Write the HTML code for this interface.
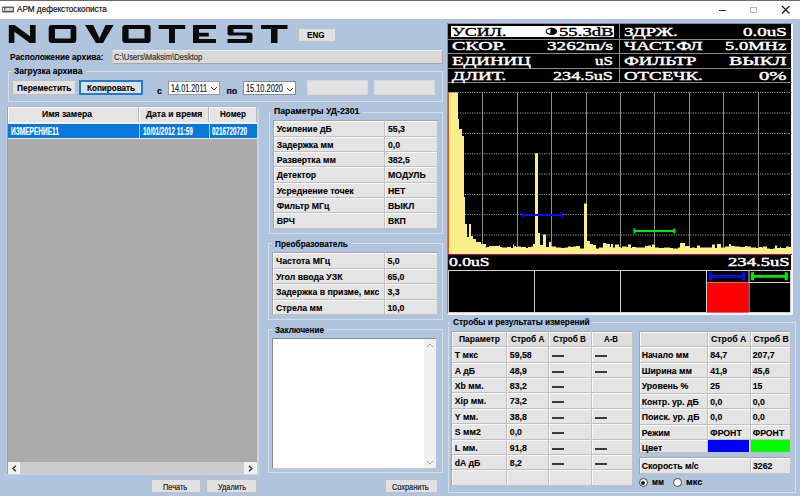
<!DOCTYPE html><html><head><meta charset="utf-8"><style>
html,body{margin:0;padding:0;}
body{width:800px;height:496px;overflow:hidden;position:relative;background:#B0C4DE;font-family:"Liberation Sans",sans-serif;}
.a{position:absolute;box-sizing:border-box;}
.t{position:absolute;white-space:nowrap;}
</style></head><body>
<div class="a" style="left:0px;top:0px;width:800px;height:19px;background:#fff;border-top:1px solid #6a6a6a;"></div>
<svg class="a" style="left:0;top:0" width="20" height="19" viewBox="0 0 20 19"><rect x="2" y="6.4" width="12" height="6" rx="1.2" fill="#5a5a5a"/><rect x="2.8" y="7.9" width="1.2" height="3" fill="#f4f4f4"/><rect x="4.8" y="7.9" width="7.8" height="3" fill="#c8c8c8"/><rect x="7" y="8.6" width="2" height="1.6" fill="#fafafa"/><rect x="10.8" y="8.2" width="1.5" height="2.4" fill="#e8e8e8"/></svg>
<div class="t" style="left:17.00px;top:5.00px;font:normal 9.01px/9.01px 'Liberation Sans';color:#111;-webkit-text-stroke:0.2px #111;;transform:scaleX(0.907);transform-origin:0 0">АРМ дефекстоскописта</div>
<div class="a" style="left:719px;top:10px;width:7px;height:1px;background:#333;"></div>
<div class="a" style="left:750px;top:6.5px;width:7px;height:6.5px;border:1px solid #bcbcbc;"></div>
<svg class="a" style="left:781px;top:5px" width="10" height="10" viewBox="0 0 10 10"><path d="M1 1L8.5 8.5M8.5 1L1 8.5" stroke="#111" stroke-width="1.1"/></svg>
<svg class="a" style="left:0;top:0" width="300" height="50" viewBox="0 0 300 50">
<g fill="#0a0a0a">
<path d="M8.8 25h5.8l15.4 11.2V25h5.6v18h-5.8L14.4 31.8V43h-5.6z"/>
<path fill-rule="evenodd" d="M51.7 25h21.6a3 3 0 0 1 3 3v12a3 3 0 0 1-3 3H51.7a3 3 0 0 1-3-3V28a3 3 0 0 1 3-3zM55 29v9.6h15.6v-9.6z"/>
<path d="M85 25h8.2l6.3 13.2 6-13.2h8.1L103 43h-7z"/>
<path fill-rule="evenodd" d="M125.3 25h22.3a3 3 0 0 1 3 3v12a3 3 0 0 1-3 3H125.3a3 3 0 0 1-3-3V28a3 3 0 0 1 3-3zM128.6 29v9.6h15.9v-9.6z"/>
<path d="M158.7 25h26.5v4h-10.2v14h-6v-14h-10.3z"/>
<path d="M193 25h23v4h-17v3.8h9.8v3.6h-9.8v2.6h17v4h-23z"/>
<path d="M230 25h22.5v4h-19v3.5h16.5a2.5 2.5 0 0 1 2.5 2.5v5.5a2.5 2.5 0 0 1-2.5 2.5h-22.5v-4h19v-3.5h-16.5a2.5 2.5 0 0 1-2.5-2.5v-5.5a2.5 2.5 0 0 1 2.5-2.5z"/>
<path d="M261 25h26.5v4h-10v14h-6.5v-14h-10z"/>
</g></svg>
<div class="a" style="left:298px;top:28px;width:38px;height:14px;background:#E1E1E1;border:1px solid #C0C0C0;"></div>
<div class="t" style="left:307.40px;top:31.00px;font:bold 9.01px/9.01px 'Liberation Sans';color:#000;-webkit-text-stroke:0.1px #000;;transform:scaleX(0.896);transform-origin:0 0">ENG</div>
<div class="t" style="left:9.75px;top:52.00px;font:bold 9.45px/9.45px 'Liberation Sans';color:#000;-webkit-text-stroke:0.1px #000;;transform:scaleX(0.878);transform-origin:0 0">Расположение архива:</div>
<div class="a" style="left:112px;top:50px;width:331px;height:14px;background:#D9D9D9;border:1px solid #A8A8A8;border-top-color:#ECECEC;border-left-color:#D0D0D0;"></div>
<div class="t" style="left:114.00px;top:52.00px;font:normal 9.59px/9.59px 'Liberation Sans';color:#333;-webkit-text-stroke:0.2px #333;;transform:scaleX(0.798);transform-origin:0 0">C:\Users\Maksim\Desktop</div>
<div class="a" style="left:8px;top:71px;width:435px;height:30.5px;border:1px solid #D5DCE6;"></div>
<div class="a" style="left:12px;top:66px;width:74px;height:8px;background:#B0C4DE;"></div>
<div class="t" style="left:14.00px;top:67.00px;font:bold 8.72px/8.72px 'Liberation Sans';color:#000;-webkit-text-stroke:0.1px #000;;transform:scaleX(0.974);transform-origin:0 0">Загрузка архива</div>
<div class="a" style="left:12px;top:80px;width:64px;height:15px;background:#E1E1E1;border:1px solid #BDBDBD;"></div>
<div class="t" style="left:16.60px;top:84.00px;font:bold 9.16px/9.16px 'Liberation Sans';color:#000;-webkit-text-stroke:0.1px #000;;transform:scaleX(0.917);transform-origin:0 0">Переместить</div>
<div class="a" style="left:79px;top:80px;width:64px;height:15px;background:#E1E1E1;border:2px solid #1A7ED8;"></div>
<div class="t" style="left:87.00px;top:84.00px;font:bold 9.16px/9.16px 'Liberation Sans';color:#000;-webkit-text-stroke:0.1px #000;;transform:scaleX(0.885);transform-origin:0 0">Копировать</div>
<div class="t" style="left:157.00px;top:87.00px;font:bold 8.90px/8.90px 'Liberation Sans';color:#000;-webkit-text-stroke:0.1px #000;;transform:scaleX(1.000);transform-origin:0 0">с</div>
<div class="a" style="left:168px;top:81px;width:52px;height:14px;background:#fff;border:1px solid #9A9A9A;"></div>
<div class="t" style="left:170.60px;top:84.00px;font:normal 10.03px/10.03px 'Liberation Sans';color:#222;-webkit-text-stroke:0.2px #222;;transform:scaleX(0.728);transform-origin:0 0">14.01.2011</div>
<svg class="a" style="left:210px;top:86px" width="8" height="5" viewBox="0 0 8 5"><path d="M1 1L4 4L7 1" stroke="#444" fill="none" stroke-width="1"/></svg>
<div class="t" style="left:226.50px;top:87.00px;font:bold 8.90px/8.90px 'Liberation Sans';color:#000;-webkit-text-stroke:0.1px #000;;transform:scaleX(1.000);transform-origin:0 0">по</div>
<div class="a" style="left:243px;top:81px;width:53px;height:14px;background:#fff;border:1px solid #8A8A8A;"></div>
<div class="t" style="left:245.50px;top:84.00px;font:normal 10.03px/10.03px 'Liberation Sans';color:#222;-webkit-text-stroke:0.2px #222;;transform:scaleX(0.737);transform-origin:0 0">15.10.2020</div>
<svg class="a" style="left:286px;top:86.5px" width="8" height="5" viewBox="0 0 8 5"><path d="M1 1L4 4L7 1" stroke="#444" fill="none" stroke-width="1"/></svg>
<div class="a" style="left:307px;top:80px;width:61px;height:15px;background:#E2E2E2;border:1px solid #D8D8D8;"></div>
<div class="a" style="left:374px;top:80px;width:61px;height:15px;background:#E2E2E2;border:1px solid #D8D8D8;"></div>
<div class="a" style="left:6px;top:106px;width:253px;height:369px;border:1px solid #C6D4E6;border-right-width:2px;border-top-color:#A9BAD0;border-left-color:#B9C8DC;"></div>
<div class="a" style="left:7px;top:107px;width:1px;height:367px;background:#9AA6B4;"></div>
<div class="a" style="left:7.5px;top:107px;width:249.5px;height:15px;background:#E4E4E4;border-top:1px solid #FAFAFA;border-left:1px solid #FAFAFA;"></div>
<div class="a" style="left:138.4px;top:107px;width:1px;height:15px;background:#B8B8B8;"></div>
<div class="a" style="left:139.4px;top:107px;width:1px;height:15px;background:#FAFAFA;"></div>
<div class="a" style="left:207.6px;top:107px;width:1px;height:15px;background:#B8B8B8;"></div>
<div class="a" style="left:208.6px;top:107px;width:1px;height:15px;background:#FAFAFA;"></div>
<div class="a" style="left:256px;top:107px;width:1px;height:15px;background:#B8B8B8;"></div>
<div class="t" style="left:42.00px;top:110.00px;font:bold 8.72px/8.72px 'Liberation Sans';color:#000;-webkit-text-stroke:0.1px #000;;transform:scaleX(0.985);transform-origin:0 0">Имя замера</div>
<div class="t" style="left:146.00px;top:110.00px;font:bold 8.72px/8.72px 'Liberation Sans';color:#000;-webkit-text-stroke:0.1px #000;;transform:scaleX(0.983);transform-origin:0 0">Дата и время</div>
<div class="t" style="left:220.00px;top:110.00px;font:bold 8.72px/8.72px 'Liberation Sans';color:#000;-webkit-text-stroke:0.1px #000;;transform:scaleX(0.924);transform-origin:0 0">Номер</div>
<div class="a" style="left:8px;top:122px;width:249px;height:2px;background:#F2F2F2;"></div>
<div class="a" style="left:8px;top:124px;width:249px;height:14px;background:#0A78D7;"></div>
<div class="a" style="left:139.4px;top:124px;width:1px;height:14px;background:#A8CCEE;"></div>
<div class="a" style="left:208.6px;top:124px;width:1px;height:14px;background:#A8CCEE;"></div>
<div class="a" style="left:8px;top:138px;width:249px;height:1px;background:#E8E8E8;"></div>
<div class="t" style="left:11.00px;top:127.00px;font:bold 10.17px/10.17px 'Liberation Sans';color:#fff;-webkit-text-stroke:0.15px #fff;;transform:scaleX(0.642);transform-origin:0 0">ИЗМЕРЕНИЕ11</div>
<div class="t" style="left:143.00px;top:127.00px;font:bold 10.17px/10.17px 'Liberation Sans';color:#fff;-webkit-text-stroke:0.15px #fff;;transform:scaleX(0.631);transform-origin:0 0">10/01/2012 11:59</div>
<div class="t" style="left:212.00px;top:127.00px;font:bold 10.17px/10.17px 'Liberation Sans';color:#fff;-webkit-text-stroke:0.15px #fff;;transform:scaleX(0.619);transform-origin:0 0">0216720720</div>
<div class="a" style="left:8px;top:139px;width:249px;height:323px;background:#ABABAB;"></div>
<div class="a" style="left:8px;top:462px;width:249px;height:12px;background:#F0F0F0;"></div>
<div class="a" style="left:20px;top:462px;width:224px;height:12px;background:#CDCDCD;"></div>
<svg class="a" style="left:11px;top:464.5px" width="7" height="7" viewBox="0 0 7 7"><path d="M4.8 0.8L2 3.5L4.8 6.2" stroke="#333" fill="none" stroke-width="1.4"/></svg>
<svg class="a" style="left:247px;top:464.5px" width="7" height="7" viewBox="0 0 7 7"><path d="M2 0.8L4.8 3.5L2 6.2" stroke="#333" fill="none" stroke-width="1.4"/></svg>
<div class="a" style="left:151px;top:479px;width:50px;height:14px;background:#E1E1E1;border:1px solid #C0C0C0;"></div>
<div class="t" style="left:162.50px;top:483.00px;font:normal 8.72px/8.72px 'Liberation Sans';color:#222;-webkit-text-stroke:0.2px #222;;transform:scaleX(0.844);transform-origin:0 0">Печать</div>
<div class="a" style="left:206px;top:479px;width:51px;height:14px;background:#E1E1E1;border:1px solid #C0C0C0;"></div>
<div class="t" style="left:217.50px;top:483.00px;font:normal 8.72px/8.72px 'Liberation Sans';color:#222;-webkit-text-stroke:0.2px #222;;transform:scaleX(0.841);transform-origin:0 0">Удалить</div>
<div class="a" style="left:268.5px;top:111.5px;width:174.0px;height:122.5px;border:1px solid #D5DCE6;"></div>
<div class="a" style="left:271px;top:107.5px;width:91.39999999999998px;height:8px;background:#B0C4DE;"></div>
<div class="t" style="left:274.00px;top:107.00px;font:bold 8.72px/8.72px 'Liberation Sans';color:#000;-webkit-text-stroke:0.1px #000;;transform:scaleX(0.999);transform-origin:0 0">Параметры УД-2301</div>
<div class="a" style="left:273.0px;top:120px;width:164.0px;height:108px;background:#E4E4E4;"></div>
<div class="a" style="left:273.0px;top:121px;width:164.0px;height:1px;background:#FAFAFA;"></div>
<div class="a" style="left:273.0px;top:137px;width:164.0px;height:1px;background:#FAFAFA;"></div>
<div class="a" style="left:273.0px;top:152px;width:164.0px;height:1px;background:#FAFAFA;"></div>
<div class="a" style="left:273.0px;top:167px;width:164.0px;height:1px;background:#FAFAFA;"></div>
<div class="a" style="left:273.0px;top:183px;width:164.0px;height:1px;background:#FAFAFA;"></div>
<div class="a" style="left:273.0px;top:198px;width:164.0px;height:1px;background:#FAFAFA;"></div>
<div class="a" style="left:273.0px;top:213px;width:164.0px;height:1px;background:#FAFAFA;"></div>
<div class="a" style="left:274.0px;top:120px;width:1px;height:108px;background:#FAFAFA;"></div>
<div class="a" style="left:385px;top:120px;width:1px;height:108px;background:#FAFAFA;"></div>
<div class="a" style="left:273.0px;top:120px;width:165.0px;height:1px;background:#A4A4A4;"></div>
<div class="a" style="left:273.0px;top:136px;width:165.0px;height:1px;background:#C0C0C0;"></div>
<div class="a" style="left:273.0px;top:151px;width:165.0px;height:1px;background:#C0C0C0;"></div>
<div class="a" style="left:273.0px;top:166px;width:165.0px;height:1px;background:#C0C0C0;"></div>
<div class="a" style="left:273.0px;top:182px;width:165.0px;height:1px;background:#C0C0C0;"></div>
<div class="a" style="left:273.0px;top:197px;width:165.0px;height:1px;background:#C0C0C0;"></div>
<div class="a" style="left:273.0px;top:212px;width:165.0px;height:1px;background:#C0C0C0;"></div>
<div class="a" style="left:273.0px;top:228px;width:165.0px;height:1px;background:#C0C0C0;"></div>
<div class="a" style="left:273.0px;top:120px;width:1px;height:109px;background:#A4A4A4;"></div>
<div class="a" style="left:384px;top:120px;width:1px;height:109px;background:#C0C0C0;"></div>
<div class="a" style="left:437px;top:120px;width:1px;height:109px;background:#C0C0C0;"></div>
<div class="t" style="left:276.75px;top:125.00px;font:bold 8.72px/8.72px 'Liberation Sans';color:#000;-webkit-text-stroke:0.1px #000;;transform:scaleX(1.000);transform-origin:0 0">Усиление дБ</div>
<div class="t" style="left:388.00px;top:125.00px;font:bold 8.72px/8.72px 'Liberation Sans';color:#000;-webkit-text-stroke:0.1px #000;;transform:scaleX(1.000);transform-origin:0 0">55,3</div>
<div class="t" style="left:276.75px;top:141.00px;font:bold 8.72px/8.72px 'Liberation Sans';color:#000;-webkit-text-stroke:0.1px #000;;transform:scaleX(1.000);transform-origin:0 0">Задержка мм</div>
<div class="t" style="left:388.00px;top:141.00px;font:bold 8.72px/8.72px 'Liberation Sans';color:#000;-webkit-text-stroke:0.1px #000;;transform:scaleX(1.000);transform-origin:0 0">0,0</div>
<div class="t" style="left:276.75px;top:156.00px;font:bold 8.72px/8.72px 'Liberation Sans';color:#000;-webkit-text-stroke:0.1px #000;;transform:scaleX(1.000);transform-origin:0 0">Развертка мм</div>
<div class="t" style="left:388.00px;top:156.00px;font:bold 8.72px/8.72px 'Liberation Sans';color:#000;-webkit-text-stroke:0.1px #000;;transform:scaleX(1.000);transform-origin:0 0">382,5</div>
<div class="t" style="left:276.75px;top:171.00px;font:bold 8.72px/8.72px 'Liberation Sans';color:#000;-webkit-text-stroke:0.1px #000;;transform:scaleX(1.000);transform-origin:0 0">Детектор</div>
<div class="t" style="left:388.00px;top:171.00px;font:bold 8.72px/8.72px 'Liberation Sans';color:#000;-webkit-text-stroke:0.1px #000;;transform:scaleX(1.000);transform-origin:0 0">МОДУЛЬ</div>
<div class="t" style="left:276.75px;top:187.00px;font:bold 8.72px/8.72px 'Liberation Sans';color:#000;-webkit-text-stroke:0.1px #000;;transform:scaleX(1.000);transform-origin:0 0">Усреднение точек</div>
<div class="t" style="left:388.00px;top:187.00px;font:bold 8.72px/8.72px 'Liberation Sans';color:#000;-webkit-text-stroke:0.1px #000;;transform:scaleX(1.000);transform-origin:0 0">НЕТ</div>
<div class="t" style="left:276.75px;top:202.00px;font:bold 8.72px/8.72px 'Liberation Sans';color:#000;-webkit-text-stroke:0.1px #000;;transform:scaleX(1.000);transform-origin:0 0">Фильтр МГц</div>
<div class="t" style="left:388.00px;top:202.00px;font:bold 8.72px/8.72px 'Liberation Sans';color:#000;-webkit-text-stroke:0.1px #000;;transform:scaleX(1.000);transform-origin:0 0">ВЫКЛ</div>
<div class="t" style="left:276.75px;top:217.00px;font:bold 8.72px/8.72px 'Liberation Sans';color:#000;-webkit-text-stroke:0.1px #000;;transform:scaleX(1.000);transform-origin:0 0">ВРЧ</div>
<div class="t" style="left:388.00px;top:217.00px;font:bold 8.72px/8.72px 'Liberation Sans';color:#000;-webkit-text-stroke:0.1px #000;;transform:scaleX(1.000);transform-origin:0 0">ВКП</div>
<div class="a" style="left:268px;top:243.4px;width:174.5px;height:76.6px;border:1px solid #D5DCE6;"></div>
<div class="a" style="left:271.75px;top:239.4px;width:78.75px;height:8px;background:#B0C4DE;"></div>
<div class="t" style="left:274.75px;top:240.00px;font:bold 8.72px/8.72px 'Liberation Sans';color:#000;-webkit-text-stroke:0.1px #000;;transform:scaleX(0.945);transform-origin:0 0">Преобразователь</div>
<div class="a" style="left:272px;top:252px;width:165px;height:62px;background:#E4E4E4;"></div>
<div class="a" style="left:272px;top:253px;width:165px;height:1px;background:#FAFAFA;"></div>
<div class="a" style="left:272px;top:269px;width:165px;height:1px;background:#FAFAFA;"></div>
<div class="a" style="left:272px;top:284px;width:165px;height:1px;background:#FAFAFA;"></div>
<div class="a" style="left:272px;top:300px;width:165px;height:1px;background:#FAFAFA;"></div>
<div class="a" style="left:273px;top:252px;width:1px;height:62px;background:#FAFAFA;"></div>
<div class="a" style="left:385px;top:252px;width:1px;height:62px;background:#FAFAFA;"></div>
<div class="a" style="left:272px;top:252px;width:166px;height:1px;background:#A4A4A4;"></div>
<div class="a" style="left:272px;top:268px;width:166px;height:1px;background:#C0C0C0;"></div>
<div class="a" style="left:272px;top:283px;width:166px;height:1px;background:#C0C0C0;"></div>
<div class="a" style="left:272px;top:299px;width:166px;height:1px;background:#C0C0C0;"></div>
<div class="a" style="left:272px;top:314px;width:166px;height:1px;background:#C0C0C0;"></div>
<div class="a" style="left:272px;top:252px;width:1px;height:63px;background:#A4A4A4;"></div>
<div class="a" style="left:384px;top:252px;width:1px;height:63px;background:#C0C0C0;"></div>
<div class="a" style="left:437px;top:252px;width:1px;height:63px;background:#C0C0C0;"></div>
<div class="t" style="left:276.00px;top:257.00px;font:bold 8.72px/8.72px 'Liberation Sans';color:#000;-webkit-text-stroke:0.1px #000;;transform:scaleX(1.000);transform-origin:0 0">Частота МГц</div>
<div class="t" style="left:387.50px;top:257.00px;font:bold 8.72px/8.72px 'Liberation Sans';color:#000;-webkit-text-stroke:0.1px #000;;transform:scaleX(1.000);transform-origin:0 0">5,0</div>
<div class="t" style="left:276.00px;top:273.00px;font:bold 8.72px/8.72px 'Liberation Sans';color:#000;-webkit-text-stroke:0.1px #000;;transform:scaleX(1.000);transform-origin:0 0">Угол ввода УЗК</div>
<div class="t" style="left:387.50px;top:273.00px;font:bold 8.72px/8.72px 'Liberation Sans';color:#000;-webkit-text-stroke:0.1px #000;;transform:scaleX(1.000);transform-origin:0 0">65,0</div>
<div class="t" style="left:276.00px;top:288.00px;font:bold 8.72px/8.72px 'Liberation Sans';color:#000;-webkit-text-stroke:0.1px #000;;transform:scaleX(1.000);transform-origin:0 0">Задержка в призме, мкс</div>
<div class="t" style="left:387.50px;top:288.00px;font:bold 8.72px/8.72px 'Liberation Sans';color:#000;-webkit-text-stroke:0.1px #000;;transform:scaleX(1.000);transform-origin:0 0">3,3</div>
<div class="t" style="left:276.00px;top:304.00px;font:bold 8.72px/8.72px 'Liberation Sans';color:#000;-webkit-text-stroke:0.1px #000;;transform:scaleX(1.000);transform-origin:0 0">Стрела мм</div>
<div class="t" style="left:387.50px;top:304.00px;font:bold 8.72px/8.72px 'Liberation Sans';color:#000;-webkit-text-stroke:0.1px #000;;transform:scaleX(1.000);transform-origin:0 0">10,0</div>
<div class="a" style="left:268px;top:329px;width:174.5px;height:144px;border:1px solid #D5DCE6;"></div>
<div class="a" style="left:271.75px;top:325px;width:55.0px;height:8px;background:#B0C4DE;"></div>
<div class="t" style="left:274.75px;top:326.00px;font:bold 8.72px/8.72px 'Liberation Sans';color:#000;-webkit-text-stroke:0.1px #000;;transform:scaleX(0.927);transform-origin:0 0">Заключение</div>
<div class="a" style="left:272px;top:338px;width:164px;height:131px;background:#fff;border:1px solid #8C8C8C;border-right-color:#C8C8C8;border-bottom-color:#C8C8C8;"></div>
<div class="a" style="left:423.5px;top:339px;width:12px;height:129px;background:#F0F0F0;"></div>
<svg class="a" style="left:425.5px;top:343px" width="8" height="5" viewBox="0 0 8 5"><path d="M1 4L4 1L7 4" stroke="#A6A6A6" fill="none" stroke-width="1"/></svg>
<svg class="a" style="left:425.5px;top:459.5px" width="8" height="5" viewBox="0 0 8 5"><path d="M1 1L4 4L7 1" stroke="#A6A6A6" fill="none" stroke-width="1"/></svg>
<div class="a" style="left:385px;top:479px;width:53px;height:14px;background:#E1E1E1;border:1px solid #C0C0C0;"></div>
<div class="t" style="left:392.20px;top:483.00px;font:normal 8.72px/8.72px 'Liberation Sans';color:#222;-webkit-text-stroke:0.2px #222;;transform:scaleX(0.845);transform-origin:0 0">Сохранить</div>
<div class="a" style="left:447px;top:23px;width:346px;height:292px;background:#000;border-top:1px solid #8C8C8C;border-left:1px solid #8C8C8C;border-right:2px solid #F2F5FA;border-bottom:2px solid #F2F5FA;"></div>
<div class="a" style="left:448px;top:39px;width:344px;height:1px;background:#8A8A8A;"></div>
<div class="a" style="left:448px;top:53px;width:344px;height:1px;background:#8A8A8A;"></div>
<div class="a" style="left:448px;top:67.6px;width:344px;height:1px;background:#8A8A8A;"></div>
<div class="a" style="left:448px;top:82.2px;width:344px;height:1px;background:#8A8A8A;"></div>
<div class="a" style="left:619px;top:24px;width:1px;height:59px;background:#8A8A8A;"></div>
<div class="a" style="left:451px;top:26px;width:163px;height:11px;background:#fff;"></div>
<div class="t" style="left:451.75px;top:26.00px;font:normal 12.21px/12.21px 'Liberation Serif';color:#000;-webkit-text-stroke:0.35px #000;;transform:scaleX(1.474);transform-origin:0 0">УСИЛ.</div>
<svg class="a" style="left:544px;top:26px" width="15" height="11" viewBox="0 0 15 11"><ellipse cx="7.3" cy="5.3" rx="5.2" ry="3.1" fill="#fff" stroke="#000" stroke-width="1.1"/><path d="M7 2.2A5.2 3.1 0 0 1 7 8.4Z" fill="#000" stroke="#000" stroke-width="1.1"/></svg>
<div class="t" style="left:558.50px;top:26.00px;font:normal 12.21px/12.21px 'Liberation Serif';color:#000;-webkit-text-stroke:0.35px #000;;transform:scaleX(1.533);transform-origin:0 0">55.3dB</div>
<div class="t" style="left:451.75px;top:40.00px;font:normal 12.21px/12.21px 'Liberation Serif';color:#fff;-webkit-text-stroke:0.4px #fff;;transform:scaleX(1.638);transform-origin:0 0">СКОР.</div>
<div class="t" style="left:547.40px;top:40.00px;font:normal 12.21px/12.21px 'Liberation Serif';color:#fff;-webkit-text-stroke:0.4px #fff;;transform:scaleX(1.569);transform-origin:0 0">3262m/s</div>
<div class="t" style="left:451.75px;top:55.00px;font:normal 12.21px/12.21px 'Liberation Serif';color:#fff;-webkit-text-stroke:0.4px #fff;;transform:scaleX(1.544);transform-origin:0 0">ЕДИНИЦ</div>
<div class="t" style="left:594.70px;top:55.00px;font:normal 12.21px/12.21px 'Liberation Serif';color:#fff;-webkit-text-stroke:0.4px #fff;;transform:scaleX(1.388);transform-origin:0 0">uS</div>
<div class="t" style="left:451.75px;top:70.00px;font:normal 12.21px/12.21px 'Liberation Serif';color:#fff;-webkit-text-stroke:0.4px #fff;;transform:scaleX(1.568);transform-origin:0 0">ДЛИТ.</div>
<div class="t" style="left:552.60px;top:70.00px;font:normal 12.21px/12.21px 'Liberation Serif';color:#fff;-webkit-text-stroke:0.4px #fff;;transform:scaleX(1.486);transform-origin:0 0">234.5uS</div>
<div class="t" style="left:623.75px;top:26.00px;font:normal 12.21px/12.21px 'Liberation Serif';color:#fff;-webkit-text-stroke:0.4px #fff;;transform:scaleX(1.578);transform-origin:0 0">ЗДРЖ.</div>
<div class="t" style="left:742.50px;top:26.00px;font:normal 12.21px/12.21px 'Liberation Serif';color:#fff;-webkit-text-stroke:0.4px #fff;;transform:scaleX(1.553);transform-origin:0 0">0.0uS</div>
<div class="t" style="left:623.75px;top:40.00px;font:normal 12.21px/12.21px 'Liberation Serif';color:#fff;-webkit-text-stroke:0.4px #fff;;transform:scaleX(1.556);transform-origin:0 0">ЧАСТ.ФЛ</div>
<div class="t" style="left:725.00px;top:40.00px;font:normal 12.21px/12.21px 'Liberation Serif';color:#fff;-webkit-text-stroke:0.4px #fff;;transform:scaleX(1.517);transform-origin:0 0">5.0MHz</div>
<div class="t" style="left:623.75px;top:55.00px;font:normal 12.21px/12.21px 'Liberation Serif';color:#fff;-webkit-text-stroke:0.4px #fff;;transform:scaleX(1.539);transform-origin:0 0">ФИЛЬТР</div>
<div class="t" style="left:728.75px;top:55.00px;font:normal 12.21px/12.21px 'Liberation Serif';color:#fff;-webkit-text-stroke:0.4px #fff;;transform:scaleX(1.632);transform-origin:0 0">ВЫКЛ</div>
<div class="t" style="left:623.75px;top:70.00px;font:normal 12.21px/12.21px 'Liberation Serif';color:#fff;-webkit-text-stroke:0.4px #fff;;transform:scaleX(1.543);transform-origin:0 0">ОТСЕЧК.</div>
<div class="t" style="left:758.75px;top:70.00px;font:normal 12.21px/12.21px 'Liberation Serif';color:#fff;-webkit-text-stroke:0.4px #fff;;transform:scaleX(1.689);transform-origin:0 0">0%</div>
<svg class="a" style="left:0;top:0" width="800" height="320" viewBox="0 0 800 320"><line x1="482.5" y1="92.5" x2="482.5" y2="254.5" stroke="#8f8f8f" stroke-width="1"/><line x1="517.5" y1="92.5" x2="517.5" y2="254.5" stroke="#8f8f8f" stroke-width="1"/><line x1="551.5" y1="92.5" x2="551.5" y2="254.5" stroke="#8f8f8f" stroke-width="1"/><line x1="586.5" y1="92.5" x2="586.5" y2="254.5" stroke="#8f8f8f" stroke-width="1"/><line x1="620.5" y1="92.5" x2="620.5" y2="254.5" stroke="#8f8f8f" stroke-width="1"/><line x1="654.5" y1="92.5" x2="654.5" y2="254.5" stroke="#8f8f8f" stroke-width="1"/><line x1="689.5" y1="92.5" x2="689.5" y2="254.5" stroke="#8f8f8f" stroke-width="1"/><line x1="723.5" y1="92.5" x2="723.5" y2="254.5" stroke="#8f8f8f" stroke-width="1"/><line x1="758.5" y1="92.5" x2="758.5" y2="254.5" stroke="#8f8f8f" stroke-width="1"/><line x1="448" y1="92.5" x2="792" y2="92.5" stroke="#9a9a9a" stroke-width="1" stroke-dasharray="1.2 1.2"/><line x1="448" y1="113" x2="792" y2="113" stroke="#9a9a9a" stroke-width="1" stroke-dasharray="1.2 1.2"/><line x1="448" y1="133.5" x2="792" y2="133.5" stroke="#9a9a9a" stroke-width="1" stroke-dasharray="1.2 1.2"/><line x1="448" y1="153.8" x2="792" y2="153.8" stroke="#9a9a9a" stroke-width="1" stroke-dasharray="1.2 1.2"/><line x1="448" y1="174" x2="792" y2="174" stroke="#9a9a9a" stroke-width="1" stroke-dasharray="1.2 1.2"/><line x1="448" y1="194.5" x2="792" y2="194.5" stroke="#9a9a9a" stroke-width="1" stroke-dasharray="1.2 1.2"/><line x1="448" y1="214.6" x2="792" y2="214.6" stroke="#9a9a9a" stroke-width="1" stroke-dasharray="1.2 1.2"/><line x1="448" y1="235" x2="792" y2="235" stroke="#9a9a9a" stroke-width="1" stroke-dasharray="1.2 1.2"/><path d="M449 254.5L449 92.5L450 92.5L450 92.5L451 92.5L451 92.5L452 92.5L452 92.5L453 92.5L453 92.5L454 92.5L454 92.5L455 92.5L455 92.5L456 92.5L456 92.5L457 92.5L457 92.5L458 92.5L458 119.0L459 119.0L459 129.0L460 129.0L460 129.0L461 129.0L461 129.0L462 129.0L462 136.0L463 136.0L463 136.0L464 136.0L464 197.0L465 197.0L465 224.0L466 224.0L466 224.0L467 224.0L467 237.0L468 237.0L468 237.0L469 237.0L469 224.0L470 224.0L470 224.0L471 224.0L471 236.0L472 236.0L472 236.0L473 236.0L473 239.0L474 239.0L474 239.0L475 239.0L475 239.0L476 239.0L476 242.0L477 242.0L477 242.0L478 242.0L478 242.0L479 242.0L479 242.0L480 242.0L480 242.0L481 242.0L481 244.0L482 244.0L482 244.0L483 244.0L483 244.0L484 244.0L484 244.0L485 244.0L485 244.0L486 244.0L486 247.5L487 247.5L487 247.0L488 247.0L488 247.0L489 247.0L489 246.0L490 246.0L490 246.0L491 246.0L491 246.0L492 246.0L492 246.0L493 246.0L493 246.0L494 246.0L494 246.0L495 246.0L495 246.0L496 246.0L496 246.0L497 246.0L497 246.0L498 246.0L498 246.0L499 246.0L499 245.5L500 245.5L500 247.0L501 247.0L501 247.0L502 247.0L502 247.5L503 247.5L503 247.5L504 247.5L504 247.5L505 247.5L505 247.5L506 247.5L506 247.5L507 247.5L507 247.0L508 247.0L508 247.0L509 247.0L509 247.0L510 247.0L510 247.0L511 247.0L511 248.0L512 248.0L512 248.0L513 248.0L513 244.5L514 244.5L514 246.5L515 246.5L515 246.0L516 246.0L516 247.0L517 247.0L517 247.0L518 247.0L518 246.5L519 246.5L519 246.5L520 246.5L520 246.5L521 246.5L521 247.0L522 247.0L522 247.0L523 247.0L523 247.0L524 247.0L524 247.0L525 247.0L525 247.0L526 247.0L526 248.0L527 248.0L527 248.0L528 248.0L528 247.0L529 247.0L529 247.0L530 247.0L530 247.0L531 247.0L531 246.5L532 246.5L532 246.5L533 246.5L533 244.0L534 244.0L534 244.0L535 244.0L535 153.3L536 153.3L536 153.3L537 153.3L537 153.3L538 153.3L538 233.0L539 233.0L539 233.0L540 233.0L540 245.0L541 245.0L541 245.0L542 245.0L542 245.0L543 245.0L543 234.5L544 234.5L544 234.5L545 234.5L545 234.5L546 234.5L546 247.0L547 247.0L547 247.0L548 247.0L548 247.0L549 247.0L549 242.0L550 242.0L550 242.0L551 242.0L551 246.0L552 246.0L552 246.5L553 246.5L553 246.5L554 246.5L554 246.5L555 246.5L555 246.5L556 246.5L556 247.5L557 247.5L557 247.5L558 247.5L558 247.5L559 247.5L559 247.5L560 247.5L560 247.5L561 247.5L561 248.0L562 248.0L562 248.0L563 248.0L563 248.0L564 248.0L564 248.0L565 248.0L565 247.5L566 247.5L566 247.5L567 247.5L567 247.5L568 247.5L568 246.5L569 246.5L569 246.5L570 246.5L570 246.5L571 246.5L571 247.0L572 247.0L572 247.0L573 247.0L573 246.5L574 246.5L574 246.5L575 246.5L575 246.5L576 246.5L576 246.0L577 246.0L577 246.0L578 246.0L578 246.0L579 246.0L579 246.0L580 246.0L580 248.5L581 248.5L581 248.5L582 248.5L582 248.5L583 248.5L583 248.5L584 248.5L584 203.4L585 203.4L585 203.4L586 203.4L586 203.4L587 203.4L587 241.0L588 241.0L588 241.0L589 241.0L589 241.0L590 241.0L590 244.0L591 244.0L591 244.0L592 244.0L592 244.0L593 244.0L593 245.0L594 245.0L594 245.0L595 245.0L595 245.0L596 245.0L596 248.5L597 248.5L597 248.5L598 248.5L598 248.5L599 248.5L599 247.5L600 247.5L600 247.5L601 247.5L601 247.5L602 247.5L602 247.5L603 247.5L603 243.0L604 243.0L604 243.0L605 243.0L605 243.0L606 243.0L606 244.0L607 244.0L607 244.0L608 244.0L608 244.0L609 244.0L609 244.0L610 244.0L610 247.0L611 247.0L611 244.0L612 244.0L612 244.0L613 244.0L613 247.5L614 247.5L614 247.5L615 247.5L615 244.5L616 244.5L616 244.5L617 244.5L617 244.5L618 244.5L618 244.5L619 244.5L619 247.0L620 247.0L620 247.0L621 247.0L621 248.0L622 248.0L622 246.5L623 246.5L623 246.5L624 246.5L624 246.5L625 246.5L625 246.5L626 246.5L626 246.5L627 246.5L627 247.0L628 247.0L628 244.5L629 244.5L629 244.5L630 244.5L630 244.5L631 244.5L631 248.0L632 248.0L632 247.0L633 247.0L633 247.0L634 247.0L634 247.0L635 247.0L635 247.0L636 247.0L636 247.5L637 247.5L637 247.5L638 247.5L638 247.5L639 247.5L639 247.5L640 247.5L640 247.5L641 247.5L641 247.5L642 247.5L642 247.5L643 247.5L643 247.5L644 247.5L644 247.5L645 247.5L645 246.0L646 246.0L646 246.0L647 246.0L647 246.0L648 246.0L648 245.5L649 245.5L649 245.5L650 245.5L650 245.5L651 245.5L651 247.0L652 247.0L652 244.5L653 244.5L653 244.5L654 244.5L654 244.5L655 244.5L655 247.5L656 247.5L656 247.5L657 247.5L657 247.5L658 247.5L658 247.5L659 247.5L659 248.0L660 248.0L660 248.0L661 248.0L661 248.0L662 248.0L662 248.0L663 248.0L663 248.0L664 248.0L664 247.5L665 247.5L665 247.5L666 247.5L666 247.5L667 247.5L667 247.5L668 247.5L668 247.5L669 247.5L669 247.5L670 247.5L670 248.0L671 248.0L671 248.0L672 248.0L672 248.0L673 248.0L673 248.5L674 248.5L674 248.5L675 248.5L675 248.5L676 248.5L676 248.5L677 248.5L677 248.5L678 248.5L678 247.5L679 247.5L679 247.5L680 247.5L680 243.0L681 243.0L681 243.0L682 243.0L682 243.0L683 243.0L683 243.0L684 243.0L684 243.0L685 243.0L685 246.0L686 246.0L686 246.0L687 246.0L687 246.0L688 246.0L688 246.0L689 246.0L689 246.0L690 246.0L690 248.0L691 248.0L691 248.0L692 248.0L692 247.5L693 247.5L693 247.5L694 247.5L694 247.5L695 247.5L695 248.0L696 248.0L696 248.0L697 248.0L697 245.5L698 245.5L698 245.5L699 245.5L699 245.5L700 245.5L700 247.5L701 247.5L701 247.5L702 247.5L702 247.5L703 247.5L703 247.5L704 247.5L704 247.5L705 247.5L705 247.5L706 247.5L706 247.5L707 247.5L707 247.5L708 247.5L708 247.5L709 247.5L709 247.5L710 247.5L710 247.5L711 247.5L711 247.5L712 247.5L712 244.5L713 244.5L713 244.5L714 244.5L714 244.5L715 244.5L715 248.0L716 248.0L716 248.0L717 248.0L717 244.0L718 244.0L718 244.0L719 244.0L719 244.0L720 244.0L720 244.0L721 244.0L721 247.5L722 247.5L722 247.5L723 247.5L723 247.5L724 247.5L724 247.5L725 247.5L725 246.5L726 246.5L726 246.5L727 246.5L727 246.5L728 246.5L728 246.5L729 246.5L729 244.0L730 244.0L730 244.0L731 244.0L731 246.0L732 246.0L732 246.0L733 246.0L733 246.0L734 246.0L734 246.0L735 246.0L735 246.5L736 246.5L736 246.5L737 246.5L737 246.5L738 246.5L738 246.5L739 246.5L739 246.5L740 246.5L740 247.0L741 247.0L741 247.0L742 247.0L742 247.0L743 247.0L743 247.0L744 247.0L744 247.0L745 247.0L745 246.0L746 246.0L746 246.0L747 246.0L747 246.5L748 246.5L748 246.5L749 246.5L749 246.5L750 246.5L750 246.5L751 246.5L751 247.5L752 247.5L752 247.5L753 247.5L753 247.5L754 247.5L754 247.5L755 247.5L755 247.5L756 247.5L756 248.0L757 248.0L757 248.0L758 248.0L758 248.0L759 248.0L759 247.0L760 247.0L760 247.0L761 247.0L761 247.0L762 247.0L762 247.5L763 247.5L763 246.5L764 246.5L764 246.5L765 246.5L765 246.5L766 246.5L766 246.5L767 246.5L767 248.5L768 248.5L768 248.5L769 248.5L769 248.5L770 248.5L770 249.0L771 249.0L771 249.0L772 249.0L772 249.0L773 249.0L773 248.5L774 248.5L774 248.5L775 248.5L775 245.5L776 245.5L776 245.5L777 245.5L777 248.0L778 248.0L778 248.0L779 248.0L779 248.0L780 248.0L780 247.0L781 247.0L781 248.0L782 248.0L782 248.0L783 248.0L783 248.0L784 248.0L784 248.0L785 248.0L785 248.0L786 248.0L786 246.5L787 246.5L787 246.5L788 246.5L788 246.5L789 246.5L789 247.0L790 247.0L790 247.0L791 247.0L791 247.0L792 247.0L792 254.5Z" fill="#F9EE8A"/><line x1="448.5" y1="92.5" x2="448.5" y2="254.5" stroke="#D85A1A" stroke-width="1"/><line x1="448" y1="254.5" x2="792" y2="254.5" stroke="#B0007A" stroke-width="1"/><path d="M522 215H562.5M522.5 212.5V217.5M562 212.5V217.5" stroke="#0A0AF5" stroke-width="2"/><path d="M634 231H675M634.5 228.5V233.5M674.5 228.5V233.5" stroke="#0AE60A" stroke-width="2"/><rect x="448.5" y="270.5" width="342" height="42" fill="none" stroke="#D0D0D0" stroke-width="1"/><line x1="534.5" y1="270.5" x2="534.5" y2="313" stroke="#D0D0D0" stroke-width="1"/><line x1="620.5" y1="270.5" x2="620.5" y2="313" stroke="#D0D0D0" stroke-width="1"/><line x1="706.5" y1="270.5" x2="706.5" y2="313" stroke="#D0D0D0" stroke-width="1"/><line x1="749" y1="270.5" x2="749" y2="313" stroke="#D0D0D0" stroke-width="1"/><line x1="706.5" y1="282.5" x2="791" y2="282.5" stroke="#D0D0D0" stroke-width="1"/><rect x="707" y="282.5" width="41.5" height="30" fill="#FF0000"/><path d="M709 276.3H745" stroke="#0A0AF5" stroke-width="2.8"/><path d="M708.6 272.3h3.2v8h-3.2zM742.2 272.3h3.2v8h-3.2z" fill="#0A0AF5"/><path d="M751.5 276.3H787" stroke="#0AE60A" stroke-width="2.8"/><path d="M750.8 272.3h3.2v8h-3.2zM784.6 272.3h3.2v8h-3.2z" fill="#0AE60A"/></svg>
<div class="t" style="left:448.50px;top:256.00px;font:normal 12.21px/12.21px 'Liberation Serif';color:#fff;-webkit-text-stroke:0.4px #fff;;transform:scaleX(1.438);transform-origin:0 0">0.0uS</div>
<div class="t" style="left:728.00px;top:256.00px;font:normal 12.21px/12.21px 'Liberation Serif';color:#fff;-webkit-text-stroke:0.4px #fff;;transform:scaleX(1.528);transform-origin:0 0">234.5uS</div>
<div class="a" style="left:447.5px;top:322px;width:348.5px;height:171px;border:1px solid #D5DCE6;"></div>
<div class="a" style="left:449.6px;top:318px;width:142.79999999999995px;height:8px;background:#B0C4DE;"></div>
<div class="t" style="left:452.60px;top:318.00px;font:bold 8.72px/8.72px 'Liberation Sans';color:#000;-webkit-text-stroke:0.1px #000;;transform:scaleX(0.952);transform-origin:0 0">Стробы и результаты измерений</div>
<div class="a" style="left:451px;top:331px;width:181px;height:154px;background:#E4E4E4;"></div>
<div class="a" style="left:451px;top:331px;width:181px;height:15px;background:#DEDEDE;"></div>
<div class="a" style="left:451px;top:332px;width:181px;height:1px;background:#FAFAFA;"></div>
<div class="a" style="left:451px;top:347px;width:181px;height:1px;background:#FAFAFA;"></div>
<div class="a" style="left:451px;top:363px;width:181px;height:1px;background:#FAFAFA;"></div>
<div class="a" style="left:451px;top:378px;width:181px;height:1px;background:#FAFAFA;"></div>
<div class="a" style="left:451px;top:393px;width:181px;height:1px;background:#FAFAFA;"></div>
<div class="a" style="left:451px;top:409px;width:181px;height:1px;background:#FAFAFA;"></div>
<div class="a" style="left:451px;top:424px;width:181px;height:1px;background:#FAFAFA;"></div>
<div class="a" style="left:451px;top:440px;width:181px;height:1px;background:#FAFAFA;"></div>
<div class="a" style="left:451px;top:455px;width:181px;height:1px;background:#FAFAFA;"></div>
<div class="a" style="left:451px;top:470px;width:181px;height:1px;background:#FAFAFA;"></div>
<div class="a" style="left:452px;top:331px;width:1px;height:154px;background:#FAFAFA;"></div>
<div class="a" style="left:507px;top:331px;width:1px;height:154px;background:#FAFAFA;"></div>
<div class="a" style="left:549px;top:331px;width:1px;height:154px;background:#FAFAFA;"></div>
<div class="a" style="left:592px;top:331px;width:1px;height:154px;background:#FAFAFA;"></div>
<div class="a" style="left:451px;top:331px;width:182px;height:1px;background:#A4A4A4;"></div>
<div class="a" style="left:451px;top:346px;width:182px;height:1px;background:#C0C0C0;"></div>
<div class="a" style="left:451px;top:362px;width:182px;height:1px;background:#C0C0C0;"></div>
<div class="a" style="left:451px;top:377px;width:182px;height:1px;background:#C0C0C0;"></div>
<div class="a" style="left:451px;top:392px;width:182px;height:1px;background:#C0C0C0;"></div>
<div class="a" style="left:451px;top:408px;width:182px;height:1px;background:#C0C0C0;"></div>
<div class="a" style="left:451px;top:423px;width:182px;height:1px;background:#C0C0C0;"></div>
<div class="a" style="left:451px;top:439px;width:182px;height:1px;background:#C0C0C0;"></div>
<div class="a" style="left:451px;top:454px;width:182px;height:1px;background:#C0C0C0;"></div>
<div class="a" style="left:451px;top:469px;width:182px;height:1px;background:#C0C0C0;"></div>
<div class="a" style="left:451px;top:485px;width:182px;height:1px;background:#C0C0C0;"></div>
<div class="a" style="left:451px;top:331px;width:1px;height:155px;background:#A4A4A4;"></div>
<div class="a" style="left:506px;top:331px;width:1px;height:155px;background:#C0C0C0;"></div>
<div class="a" style="left:548px;top:331px;width:1px;height:155px;background:#C0C0C0;"></div>
<div class="a" style="left:591px;top:331px;width:1px;height:155px;background:#C0C0C0;"></div>
<div class="a" style="left:632px;top:331px;width:1px;height:155px;background:#C0C0C0;"></div>
<div class="t" style="left:458.60px;top:335.00px;font:bold 8.72px/8.72px 'Liberation Sans';color:#000;-webkit-text-stroke:0.1px #000;;transform:scaleX(0.970);transform-origin:0 0">Параметр</div>
<div class="t" style="left:511.00px;top:335.00px;font:bold 8.72px/8.72px 'Liberation Sans';color:#000;-webkit-text-stroke:0.1px #000;;transform:scaleX(0.945);transform-origin:0 0">Строб А</div>
<div class="t" style="left:553.00px;top:335.00px;font:bold 8.72px/8.72px 'Liberation Sans';color:#000;-webkit-text-stroke:0.1px #000;;transform:scaleX(0.934);transform-origin:0 0">Строб В</div>
<div class="t" style="left:604.00px;top:335.00px;font:bold 8.72px/8.72px 'Liberation Sans';color:#000;-webkit-text-stroke:0.1px #000;;transform:scaleX(0.903);transform-origin:0 0">А-В</div>
<div class="t" style="left:454.80px;top:351.00px;font:bold 8.72px/8.72px 'Liberation Sans';color:#000;-webkit-text-stroke:0.1px #000;;transform:scaleX(1.000);transform-origin:0 0">T мкс</div>
<div class="t" style="left:509.80px;top:351.00px;font:bold 8.72px/8.72px 'Liberation Sans';color:#000;-webkit-text-stroke:0.1px #000;;transform:scaleX(1.000);transform-origin:0 0">59,58</div>
<div class="a" style="left:552px;top:355.40000000000003px;width:11.5px;height:1.4px;background:#3a3a3a;"></div>
<div class="a" style="left:595px;top:355.40000000000003px;width:11.5px;height:1.4px;background:#3a3a3a;"></div>
<div class="t" style="left:454.80px;top:367.00px;font:bold 8.72px/8.72px 'Liberation Sans';color:#000;-webkit-text-stroke:0.1px #000;;transform:scaleX(1.000);transform-origin:0 0">A дБ</div>
<div class="t" style="left:509.80px;top:367.00px;font:bold 8.72px/8.72px 'Liberation Sans';color:#000;-webkit-text-stroke:0.1px #000;;transform:scaleX(1.000);transform-origin:0 0">48,9</div>
<div class="a" style="left:552px;top:371.40000000000003px;width:11.5px;height:1.4px;background:#3a3a3a;"></div>
<div class="a" style="left:595px;top:371.40000000000003px;width:11.5px;height:1.4px;background:#3a3a3a;"></div>
<div class="t" style="left:454.80px;top:382.00px;font:bold 8.72px/8.72px 'Liberation Sans';color:#000;-webkit-text-stroke:0.1px #000;;transform:scaleX(1.000);transform-origin:0 0">Xb мм.</div>
<div class="t" style="left:509.80px;top:382.00px;font:bold 8.72px/8.72px 'Liberation Sans';color:#000;-webkit-text-stroke:0.1px #000;;transform:scaleX(1.000);transform-origin:0 0">83,2</div>
<div class="a" style="left:552px;top:386.40000000000003px;width:11.5px;height:1.4px;background:#3a3a3a;"></div>
<div class="t" style="left:454.80px;top:397.00px;font:bold 8.72px/8.72px 'Liberation Sans';color:#000;-webkit-text-stroke:0.1px #000;;transform:scaleX(1.000);transform-origin:0 0">Xip мм.</div>
<div class="t" style="left:509.80px;top:397.00px;font:bold 8.72px/8.72px 'Liberation Sans';color:#000;-webkit-text-stroke:0.1px #000;;transform:scaleX(1.000);transform-origin:0 0">73,2</div>
<div class="a" style="left:552px;top:401.40000000000003px;width:11.5px;height:1.4px;background:#3a3a3a;"></div>
<div class="t" style="left:454.80px;top:413.00px;font:bold 8.72px/8.72px 'Liberation Sans';color:#000;-webkit-text-stroke:0.1px #000;;transform:scaleX(1.000);transform-origin:0 0">Y мм.</div>
<div class="t" style="left:509.80px;top:413.00px;font:bold 8.72px/8.72px 'Liberation Sans';color:#000;-webkit-text-stroke:0.1px #000;;transform:scaleX(1.000);transform-origin:0 0">38,8</div>
<div class="a" style="left:552px;top:417.40000000000003px;width:11.5px;height:1.4px;background:#3a3a3a;"></div>
<div class="a" style="left:595px;top:417.40000000000003px;width:11.5px;height:1.4px;background:#3a3a3a;"></div>
<div class="t" style="left:454.80px;top:428.00px;font:bold 8.72px/8.72px 'Liberation Sans';color:#000;-webkit-text-stroke:0.1px #000;;transform:scaleX(1.000);transform-origin:0 0">S мм2</div>
<div class="t" style="left:509.80px;top:428.00px;font:bold 8.72px/8.72px 'Liberation Sans';color:#000;-webkit-text-stroke:0.1px #000;;transform:scaleX(1.000);transform-origin:0 0">0,0</div>
<div class="a" style="left:552px;top:432.40000000000003px;width:11.5px;height:1.4px;background:#3a3a3a;"></div>
<div class="t" style="left:454.80px;top:444.00px;font:bold 8.72px/8.72px 'Liberation Sans';color:#000;-webkit-text-stroke:0.1px #000;;transform:scaleX(1.000);transform-origin:0 0">L мм.</div>
<div class="t" style="left:509.80px;top:444.00px;font:bold 8.72px/8.72px 'Liberation Sans';color:#000;-webkit-text-stroke:0.1px #000;;transform:scaleX(1.000);transform-origin:0 0">91,8</div>
<div class="a" style="left:552px;top:448.40000000000003px;width:11.5px;height:1.4px;background:#3a3a3a;"></div>
<div class="a" style="left:595px;top:448.40000000000003px;width:11.5px;height:1.4px;background:#3a3a3a;"></div>
<div class="t" style="left:454.80px;top:459.00px;font:bold 8.72px/8.72px 'Liberation Sans';color:#000;-webkit-text-stroke:0.1px #000;;transform:scaleX(1.000);transform-origin:0 0">dA дБ</div>
<div class="t" style="left:509.80px;top:459.00px;font:bold 8.72px/8.72px 'Liberation Sans';color:#000;-webkit-text-stroke:0.1px #000;;transform:scaleX(1.000);transform-origin:0 0">8,2</div>
<div class="a" style="left:552px;top:463.40000000000003px;width:11.5px;height:1.4px;background:#3a3a3a;"></div>
<div class="a" style="left:595px;top:463.40000000000003px;width:11.5px;height:1.4px;background:#3a3a3a;"></div>
<div class="a" style="left:638.5px;top:331px;width:151.5px;height:121px;background:#E4E4E4;"></div>
<div class="a" style="left:638.5px;top:331px;width:151.5px;height:15px;background:#DEDEDE;"></div>
<div class="a" style="left:638.5px;top:332px;width:151.5px;height:1px;background:#FAFAFA;"></div>
<div class="a" style="left:638.5px;top:347px;width:151.5px;height:1px;background:#FAFAFA;"></div>
<div class="a" style="left:638.5px;top:363px;width:151.5px;height:1px;background:#FAFAFA;"></div>
<div class="a" style="left:638.5px;top:378px;width:151.5px;height:1px;background:#FAFAFA;"></div>
<div class="a" style="left:638.5px;top:394px;width:151.5px;height:1px;background:#FAFAFA;"></div>
<div class="a" style="left:638.5px;top:409px;width:151.5px;height:1px;background:#FAFAFA;"></div>
<div class="a" style="left:638.5px;top:425px;width:151.5px;height:1px;background:#FAFAFA;"></div>
<div class="a" style="left:638.5px;top:440px;width:151.5px;height:1px;background:#FAFAFA;"></div>
<div class="a" style="left:639.5px;top:331px;width:1px;height:121px;background:#FAFAFA;"></div>
<div class="a" style="left:708px;top:331px;width:1px;height:121px;background:#FAFAFA;"></div>
<div class="a" style="left:750.5px;top:331px;width:1px;height:121px;background:#FAFAFA;"></div>
<div class="a" style="left:638.5px;top:331px;width:152.5px;height:1px;background:#A4A4A4;"></div>
<div class="a" style="left:638.5px;top:346px;width:152.5px;height:1px;background:#C0C0C0;"></div>
<div class="a" style="left:638.5px;top:362px;width:152.5px;height:1px;background:#C0C0C0;"></div>
<div class="a" style="left:638.5px;top:377px;width:152.5px;height:1px;background:#C0C0C0;"></div>
<div class="a" style="left:638.5px;top:393px;width:152.5px;height:1px;background:#C0C0C0;"></div>
<div class="a" style="left:638.5px;top:408px;width:152.5px;height:1px;background:#C0C0C0;"></div>
<div class="a" style="left:638.5px;top:424px;width:152.5px;height:1px;background:#C0C0C0;"></div>
<div class="a" style="left:638.5px;top:439px;width:152.5px;height:1px;background:#C0C0C0;"></div>
<div class="a" style="left:638.5px;top:452px;width:152.5px;height:1px;background:#C0C0C0;"></div>
<div class="a" style="left:638.5px;top:331px;width:1px;height:122px;background:#A4A4A4;"></div>
<div class="a" style="left:707px;top:331px;width:1px;height:122px;background:#C0C0C0;"></div>
<div class="a" style="left:749.5px;top:331px;width:1px;height:122px;background:#C0C0C0;"></div>
<div class="a" style="left:790px;top:331px;width:1px;height:122px;background:#C0C0C0;"></div>
<div class="t" style="left:711.00px;top:335.00px;font:bold 8.72px/8.72px 'Liberation Sans';color:#000;-webkit-text-stroke:0.1px #000;;transform:scaleX(1.000);transform-origin:0 0">Строб А</div>
<div class="t" style="left:753.50px;top:335.00px;font:bold 8.72px/8.72px 'Liberation Sans';color:#000;-webkit-text-stroke:0.1px #000;;transform:scaleX(1.000);transform-origin:0 0">Строб В</div>
<div class="t" style="left:641.70px;top:351.00px;font:bold 8.72px/8.72px 'Liberation Sans';color:#000;-webkit-text-stroke:0.1px #000;;transform:scaleX(1.000);transform-origin:0 0">Начало мм</div>
<div class="t" style="left:710.20px;top:351.00px;font:bold 8.72px/8.72px 'Liberation Sans';color:#000;-webkit-text-stroke:0.1px #000;;transform:scaleX(1.000);transform-origin:0 0">84,7</div>
<div class="t" style="left:752.70px;top:351.00px;font:bold 8.72px/8.72px 'Liberation Sans';color:#000;-webkit-text-stroke:0.1px #000;;transform:scaleX(1.000);transform-origin:0 0">207,7</div>
<div class="t" style="left:641.70px;top:367.00px;font:bold 8.72px/8.72px 'Liberation Sans';color:#000;-webkit-text-stroke:0.1px #000;;transform:scaleX(1.000);transform-origin:0 0">Ширина мм</div>
<div class="t" style="left:710.20px;top:367.00px;font:bold 8.72px/8.72px 'Liberation Sans';color:#000;-webkit-text-stroke:0.1px #000;;transform:scaleX(1.000);transform-origin:0 0">41,9</div>
<div class="t" style="left:752.70px;top:367.00px;font:bold 8.72px/8.72px 'Liberation Sans';color:#000;-webkit-text-stroke:0.1px #000;;transform:scaleX(1.000);transform-origin:0 0">45,6</div>
<div class="t" style="left:641.70px;top:382.00px;font:bold 8.72px/8.72px 'Liberation Sans';color:#000;-webkit-text-stroke:0.1px #000;;transform:scaleX(1.000);transform-origin:0 0">Уровень %</div>
<div class="t" style="left:710.20px;top:382.00px;font:bold 8.72px/8.72px 'Liberation Sans';color:#000;-webkit-text-stroke:0.1px #000;;transform:scaleX(1.000);transform-origin:0 0">25</div>
<div class="t" style="left:752.70px;top:382.00px;font:bold 8.72px/8.72px 'Liberation Sans';color:#000;-webkit-text-stroke:0.1px #000;;transform:scaleX(1.000);transform-origin:0 0">15</div>
<div class="t" style="left:641.70px;top:398.00px;font:bold 8.72px/8.72px 'Liberation Sans';color:#000;-webkit-text-stroke:0.1px #000;;transform:scaleX(1.000);transform-origin:0 0">Контр. ур. дБ</div>
<div class="t" style="left:710.20px;top:398.00px;font:bold 8.72px/8.72px 'Liberation Sans';color:#000;-webkit-text-stroke:0.1px #000;;transform:scaleX(1.000);transform-origin:0 0">0,0</div>
<div class="t" style="left:752.70px;top:398.00px;font:bold 8.72px/8.72px 'Liberation Sans';color:#000;-webkit-text-stroke:0.1px #000;;transform:scaleX(1.000);transform-origin:0 0">0,0</div>
<div class="t" style="left:641.70px;top:413.00px;font:bold 8.72px/8.72px 'Liberation Sans';color:#000;-webkit-text-stroke:0.1px #000;;transform:scaleX(1.000);transform-origin:0 0">Поиск. ур. дБ</div>
<div class="t" style="left:710.20px;top:413.00px;font:bold 8.72px/8.72px 'Liberation Sans';color:#000;-webkit-text-stroke:0.1px #000;;transform:scaleX(1.000);transform-origin:0 0">0,0</div>
<div class="t" style="left:752.70px;top:413.00px;font:bold 8.72px/8.72px 'Liberation Sans';color:#000;-webkit-text-stroke:0.1px #000;;transform:scaleX(1.000);transform-origin:0 0">0,0</div>
<div class="t" style="left:641.70px;top:429.00px;font:bold 8.72px/8.72px 'Liberation Sans';color:#000;-webkit-text-stroke:0.1px #000;;transform:scaleX(1.000);transform-origin:0 0">Режим</div>
<div class="t" style="left:710.20px;top:429.00px;font:bold 8.72px/8.72px 'Liberation Sans';color:#000;-webkit-text-stroke:0.1px #000;;transform:scaleX(1.000);transform-origin:0 0">ФРОНТ</div>
<div class="t" style="left:752.70px;top:429.00px;font:bold 8.72px/8.72px 'Liberation Sans';color:#000;-webkit-text-stroke:0.1px #000;;transform:scaleX(1.000);transform-origin:0 0">ФРОНТ</div>
<div class="t" style="left:641.70px;top:444.00px;font:bold 8.72px/8.72px 'Liberation Sans';color:#000;-webkit-text-stroke:0.1px #000;;transform:scaleX(1.000);transform-origin:0 0">Цвет</div>
<div class="a" style="left:708px;top:440px;width:41px;height:12px;background:#0000FF;"></div>
<div class="a" style="left:750.5px;top:440px;width:39.5px;height:12px;background:#00FF00;"></div>
<div class="a" style="left:638.5px;top:457px;width:151.5px;height:15.5px;background:#E4E4E4;"></div>
<div class="a" style="left:638.5px;top:458px;width:151.5px;height:1px;background:#FAFAFA;"></div>
<div class="a" style="left:639.5px;top:457px;width:1px;height:15.5px;background:#FAFAFA;"></div>
<div class="a" style="left:750.5px;top:457px;width:1px;height:15.5px;background:#FAFAFA;"></div>
<div class="a" style="left:638.5px;top:457px;width:152.5px;height:1px;background:#A4A4A4;"></div>
<div class="a" style="left:638.5px;top:472.5px;width:152.5px;height:1px;background:#C0C0C0;"></div>
<div class="a" style="left:638.5px;top:457px;width:1px;height:16.5px;background:#A4A4A4;"></div>
<div class="a" style="left:749.5px;top:457px;width:1px;height:16.5px;background:#C0C0C0;"></div>
<div class="a" style="left:790px;top:457px;width:1px;height:16.5px;background:#C0C0C0;"></div>
<div class="t" style="left:641.70px;top:462.00px;font:bold 8.72px/8.72px 'Liberation Sans';color:#000;-webkit-text-stroke:0.1px #000;;transform:scaleX(1.000);transform-origin:0 0">Скорость м/с</div>
<div class="t" style="left:753.00px;top:462.00px;font:bold 8.72px/8.72px 'Liberation Sans';color:#000;-webkit-text-stroke:0.1px #000;;transform:scaleX(1.000);transform-origin:0 0">3262</div>
<div class="a" style="left:638.8px;top:478px;width:9px;height:9px;background:#fff;border:1px solid #444;border-radius:50%;"></div>
<div class="a" style="left:641.3px;top:480.5px;width:4px;height:4px;background:#1a1a1a;border-radius:50%;"></div>
<div class="t" style="left:652.00px;top:478.00px;font:bold 8.70px/8.70px 'Liberation Sans';color:#000;-webkit-text-stroke:0.1px #000;;transform:scaleX(0.932);transform-origin:0 0">мм</div>
<div class="a" style="left:673px;top:478px;width:9px;height:9px;background:#fff;border:1px solid #444;border-radius:50%;"></div>
<div class="t" style="left:685.60px;top:478.00px;font:bold 8.70px/8.70px 'Liberation Sans';color:#000;-webkit-text-stroke:0.1px #000;;transform:scaleX(1.057);transform-origin:0 0">мкс</div>
</body></html>
